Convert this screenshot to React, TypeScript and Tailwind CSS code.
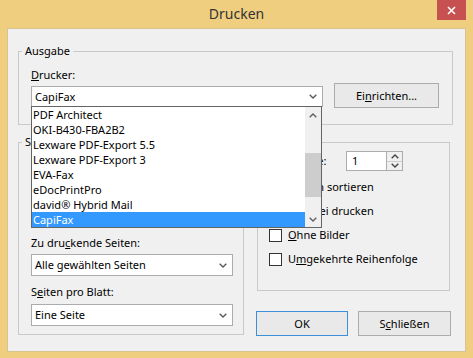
import React from "react";

const printers = [
  "PDF Architect",
  "OKI-B430-FBA2B2",
  "Lexware PDF-Export 5.5",
  "Lexware PDF-Export 3",
  "EVA-Fax",
  "eDocPrintPro",
  "david® Hybrid Mail",
  "CapiFax",
];

function Chevron({ up = false, color = "#5a5a5a" }: { up?: boolean; color?: string }) {
  return (
    <svg width="8" height="5" viewBox="0 0 8 5">
      <path d={up ? "M0.7 4.3 L4 1 L7.3 4.3" : "M0.7 0.7 L4 4 L7.3 0.7"} stroke={color} strokeWidth="1.4" fill="none" />
    </svg>
  );
}

function Combo({ value, className = "" }: { value: string; className?: string }) {
  return (
    <div className={"flex items-center bg-white border border-[#acacac] pl-[3px] pr-[5px] " + className}>
      <span>{value}</span>
      <span className="ml-auto flex">
        <Chevron />
      </span>
    </div>
  );
}

function Check({ label }: { label: React.ReactNode }) {
  return (
    <div className="h-[24px] flex items-center gap-[6px]">
      <div className="w-[13px] h-[13px] border border-[#333] bg-white" />
      <span>{label}</span>
    </div>
  );
}

function Button({ children, primary = false, className = "" }: { children: React.ReactNode; primary?: boolean; className?: string }) {
  return (
    <div
      className={
        "h-[25px] flex items-center justify-center bg-[#e9e9e9] border " +
        (primary ? "border-[#3c8fd8]" : "border-[#acacac]") +
        " " +
        className
      }
    >
      {children}
    </div>
  );
}

export default function App() {
  return (
    <div className="w-[473px] h-[358px] bg-[#f0ce80] flex flex-col font-['Noto_Sans',sans-serif] text-[11px] leading-[16px] text-black">
      {/* title bar */}
      <div className="h-[28px] relative flex items-center justify-center">
        <span className="text-[14px] text-[#333] mb-[1px]">Drucken</span>
        <div className="absolute top-0 right-[7px] w-[29px] h-[20px] bg-[#c75050] flex items-center justify-center">
          <svg width="9" height="9" viewBox="0 0 9 9">
            <path d="M1 1 L8 8 M8 1 L1 8" stroke="#fff" strokeWidth="1.6" />
          </svg>
        </div>
      </div>

      {/* client area */}
      <div className="relative ml-[7px] w-[459px] h-[324px] bg-[#f0f0f0] border border-[#d8c48f] pl-[10px] pt-[14px]">
        <fieldset className="w-[435px] border border-[#c9c9c9] pl-[12px] pr-[13px] pb-[16px]">
          <legend className="ml-[-9px] px-[3px]">Ausgabe</legend>
          <div className="mt-[8px]">
            <span className="underline">D</span>rucker:
          </div>
          <div className="flex items-start gap-[11px]">
            <Combo value="CapiFax" className="flex-1 h-[21px] mt-[3px]" />
            <Button className="w-[105px]">
              Ei<span className="underline">n</span>richten...
            </Button>
          </div>
        </fieldset>

        <div className="mt-[9px] flex gap-[13px]">
          <fieldset className="w-[226px] h-[201px] border border-[#c9c9c9] pl-[12px] pr-[10px]">
            <legend className="ml-[-9px] px-[3px]">Seitenbereich</legend>
            <div className="h-[85px]" />
            <div>
              Zu dru<span className="underline">c</span>kende Seiten:
            </div>
            <Combo value="Alle gewählten Seiten" className="mt-[3px] h-[22px]" />
            <div className="mt-[8px]">
              S<span className="underline">e</span>iten pro Blatt:
            </div>
            <Combo value="Eine Seite" className="mt-[4px] h-[22px]" />
          </fieldset>

          <div className="flex flex-col">
            <fieldset className="w-[193px] h-[157px] border border-[#c9c9c9] pl-[11px]">
              <legend className="ml-[-4px] px-[3px]">Kopien</legend>
              <div className="mt-[1px] h-[20px] flex items-center">
                <span className="w-[77px]">Exemplare:</span>
                <div className="flex h-[20px] border border-[#acacac] bg-white">
                  <div className="w-[39px] pl-[5px] flex items-center">1</div>
                  <div className="w-[16px] flex flex-col border-l border-[#acacac] bg-[#f0f0f0]">
                    <div className="flex-1 flex items-center justify-center border-b border-[#cfcfcf]">
                      <Chevron up color="#444" />
                    </div>
                    <div className="flex-1 flex items-center justify-center">
                      <Chevron color="#444" />
                    </div>
                  </div>
                </div>
              </div>
              <div className="mt-[4px]">
                <Check label="Kopien sortieren" />
                <Check label="In Datei drucken" />
                <Check
                  label={
                    <>
                      <span className="underline">O</span>hne Bilder
                    </>
                  }
                />
                <Check
                  label={
                    <>
                      U<span className="underline">m</span>gekehrte Reihenfolge
                    </>
                  }
                />
              </div>
            </fieldset>
            <div className="mt-[20px] flex gap-[10px] ml-[-1px]">
              <Button primary className="w-[92px]">OK</Button>
              <Button className="w-[93px]">
                S<span className="underline">c</span>hließen
              </Button>
            </div>
          </div>
        </div>

        {/* open dropdown list */}
        <div className="absolute left-[23px] top-[77px] w-[291px] h-[122px] border border-[#646464] bg-white flex">
          <div className="flex-1 flex flex-col">
            {printers.map((p, i) => (
              <div
                key={p}
                className={
                  "h-[15px] leading-[15px] pl-[1px] " + (i === printers.length - 1 ? "bg-[#3399ff] text-white" : "")
                }
              >
                {p}
              </div>
            ))}
          </div>
          <div className="w-[16px] bg-[#f0f0f0] flex flex-col items-center">
            <div className="h-[16px] flex items-center justify-center">
              <Chevron up color="#606060" />
            </div>
            <div className="h-[30px]" />
            <div className="w-[16px] h-[44px] bg-[#cdcdcd]" />
            <div className="flex-1" />
            <div className="h-[16px] flex items-center justify-center">
              <Chevron color="#606060" />
            </div>
          </div>
        </div>
      </div>
    </div>
  );
}
